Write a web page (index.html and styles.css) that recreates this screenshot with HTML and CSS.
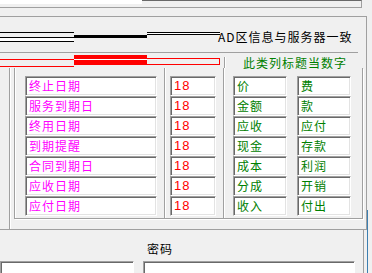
FILE: index.html
```html
<!DOCTYPE html>
<html lang="zh">
<head>
    <meta charset="UTF-8">
    <title>字段设置</title>
    <link rel="stylesheet" href="styles.css">
</head>
<body>
    <div class="page">
        <div class="main">
            <div class="top">
                <div class="top-left"></div>
                <div class="top-right"></div>
            </div>

            <div class="frame">
                <div class="sync-row">
                    <div class="strip">
                        <div class="seg-a"><div class="bk-a"></div></div>
                        <div class="seg-b"><div class="bk-b"></div></div>
                        <div class="seg-c"><div class="bk-c"></div></div>
                    </div>
                    <div class="sync-text">AD区信息与服务器一致</div>
                </div>

                <div class="head-row">
                    <div class="strip">
                        <div class="seg-a"><div class="rd-a"></div></div>
                        <div class="seg-b"><div class="rd-b"></div></div>
                        <div class="seg-c"><div class="rd-c"></div></div>
                    </div>
                    <div class="head-sep"></div>
                    <div class="head-text">此类列标题当数字</div>
                </div>

                <div class="group">
                    <div class="outer">
                        <div class="inner">
                            <div class="col col-label">
                                <div class="cell magenta">终止日期</div>
                                <div class="cell magenta">服务到期日</div>
                                <div class="cell magenta">终用日期</div>
                                <div class="cell magenta">到期提醒</div>
                                <div class="cell magenta">合同到期日</div>
                                <div class="cell magenta">应收日期</div>
                                <div class="cell magenta">应付日期</div>
                            </div>
                            <div class="vsep"></div>
                            <div class="col col-num">
                                <div class="cell num">18</div>
                                <div class="cell num">18</div>
                                <div class="cell num">18</div>
                                <div class="cell num">18</div>
                                <div class="cell num">18</div>
                                <div class="cell num">18</div>
                                <div class="cell num">18</div>
                            </div>
                            <div class="vsep"></div>
                            <div class="col col-g1">
                                <div class="cell green">价</div>
                                <div class="cell green">金额</div>
                                <div class="cell green">应收</div>
                                <div class="cell green">现金</div>
                                <div class="cell green">成本</div>
                                <div class="cell green">分成</div>
                                <div class="cell green">收入</div>
                            </div>
                            <div class="col col-g2">
                                <div class="cell green">费</div>
                                <div class="cell green">款</div>
                                <div class="cell green">应付</div>
                                <div class="cell green">存款</div>
                                <div class="cell green">利润</div>
                                <div class="cell green">开销</div>
                                <div class="cell green">付出</div>
                            </div>
                        </div>
                    </div>
                </div>
            </div>

            <div class="bottom">
                <div class="pw-left">
                    <div class="edit"></div>
                </div>
                <div class="pw-right">
                    <div class="pw-label">密码</div>
                    <div class="edit"></div>
                </div>
            </div>
        </div>
        <div class="edge"></div>
    </div>
</body>
</html>
```

FILE: styles.css
```css
* {
    margin: 0;
    padding: 0;
    box-sizing: border-box;
}

body {
    width: 372px;
    height: 273px;
    overflow: hidden;
    background: #f0f0f0;
    font-family: "Noto Sans CJK SC", "Liberation Sans", sans-serif;
    font-size: 12px;
}

.page {
    display: flex;
}

.main {
    width: 367px;
}

.edge {
    width: 1px;
    height: 63px;
    margin-top: 210px;
    background: #3c7fb1;
}

/* top edit fragments */
.top {
    display: flex;
    height: 8px;
}

.top-left {
    width: 142px;
    border-bottom: 1px solid #a0a0a0;
    background: linear-gradient(#fff 0 4px, transparent 4px);
}

.top-right {
    width: 220px;
    border-top: 1px solid #696969;
    border-right: 1px solid #a0a0a0;
    border-bottom: 1px solid #a0a0a0;
}

.frame {
    margin-top: 8px;
    border-top: 1px solid #a0a0a0;
    border-right: 1px solid #a0a0a0;
    border-bottom: 1px solid #a0a0a0;
}

/* line strips */
.strip {
    display: flex;
    width: 220px;
    flex-shrink: 0;
}

.seg-a {
    width: 74px;
}

.seg-b,
.seg-c {
    width: 73px;
}

.sync-row {
    display: flex;
    height: 35px;
}

.bk-a {
    margin-top: 15px;
    padding-top: 4px;
    border-top: 1px solid #000;
}

.bk-a::after {
    content: "";
    display: block;
    height: 3px;
    background: #fff;
    border-top: 1px solid #000;
    border-bottom: 1px solid #000;
}

.bk-b {
    margin-top: 18px;
    height: 3px;
    background: #000;
}

.bk-c {
    margin-top: 15px;
    height: 3px;
    background: #fff;
    border-top: 1px solid #000;
    border-bottom: 1px solid #000;
}

.sync-text {
    margin-left: -2px;
    padding-top: 12px;
    line-height: 16px;
    letter-spacing: 1px;
    color: #000;
    white-space: nowrap;
}

.head-row {
    display: flex;
    height: 16px;
    width: 358px;
    border-top: 1px solid #a0a0a0;
}

.rd-a {
    margin-top: 6px;
    height: 8px;
    border-top: 1px solid #f00;
    border-bottom: 1px solid #f00;
}

.rd-b {
    margin-top: 2px;
    height: 10px;
    background: #fff;
    border-top: 4px solid #f00;
    border-bottom: 5px solid #f00;
}

.rd-c {
    margin-top: 5px;
    height: 7px;
    border: 1px solid #f00;
    border-left: none;
}

.head-sep {
    margin-left: 4px;
    margin-top: 4px;
    width: 2px;
    border-left: 1px solid #a0a0a0;
    border-right: 1px solid #fff;
}

.head-text {
    margin-left: 17px;
    padding-top: 2px;
    line-height: 15px;
    letter-spacing: 1px;
    color: #008000;
    white-space: nowrap;
}

/* field table */
.group {
    height: 161px;
    padding-left: 9px;
}

.outer {
    height: 100%;
    padding-left: 4px;
    border-left: 1px solid #a0a0a0;
    box-shadow: inset 1px 0 #fff;
}

.inner {
    display: flex;
    width: 349px;
    height: 151px;
    border-left: 1px solid #a0a0a0;
    border-right: 1px solid #a0a0a0;
    border-bottom: 1px solid #a0a0a0;
    box-shadow: inset 1px 0 #fff, 1px 1px #fff;
}

.col {
    display: flex;
    flex-direction: column;
    padding-top: 8px;
}

.col-label {
    margin-left: 10px;
    width: 132px;
}

.vsep {
    margin-left: 7px;
    width: 2px;
    border-left: 1px solid #a0a0a0;
    border-right: 1px solid #fff;
}

.col-num {
    margin-left: 4px;
    width: 46px;
}

.col-g1 {
    margin-left: 8px;
    width: 54px;
}

.col-g2 {
    margin-left: 10px;
    width: 54px;
}

.cell {
    height: 20px;
    padding-left: 3px;
    line-height: 17px;
    background: #fff;
    border: 1px solid;
    border-color: #a0a0a0 #fff #fff #a0a0a0;
    box-shadow: inset 1px 1px #696969, inset -1px -1px #e3e3e3;
    letter-spacing: 1px;
    white-space: nowrap;
    overflow: hidden;
}

.magenta {
    color: #f0f;
}

.green {
    color: #008000;
}

.num {
    padding-left: 3px;
    color: #f00;
    font-family: "Liberation Sans", sans-serif;
    font-size: 13px;
    letter-spacing: 1px;
}

/* password row */
.bottom {
    display: flex;
    width: 364px;
    height: 43px;
    border-right: 1px solid #a0a0a0;
}

.pw-left {
    width: 134px;
    margin-top: 31px;
}

.pw-right {
    width: 212px;
    margin-left: 9px;
}

.pw-label {
    height: 31px;
    padding-top: 11px;
    padding-left: 4px;
    line-height: 16px;
    letter-spacing: 1px;
}

.edit {
    height: 20px;
    background: #fff;
    border-top: 1px solid #a0a0a0;
    border-left: 1px solid #a0a0a0;
    border-right: 1px solid #fff;
    box-shadow: inset 1px 1px #696969;
}
```
